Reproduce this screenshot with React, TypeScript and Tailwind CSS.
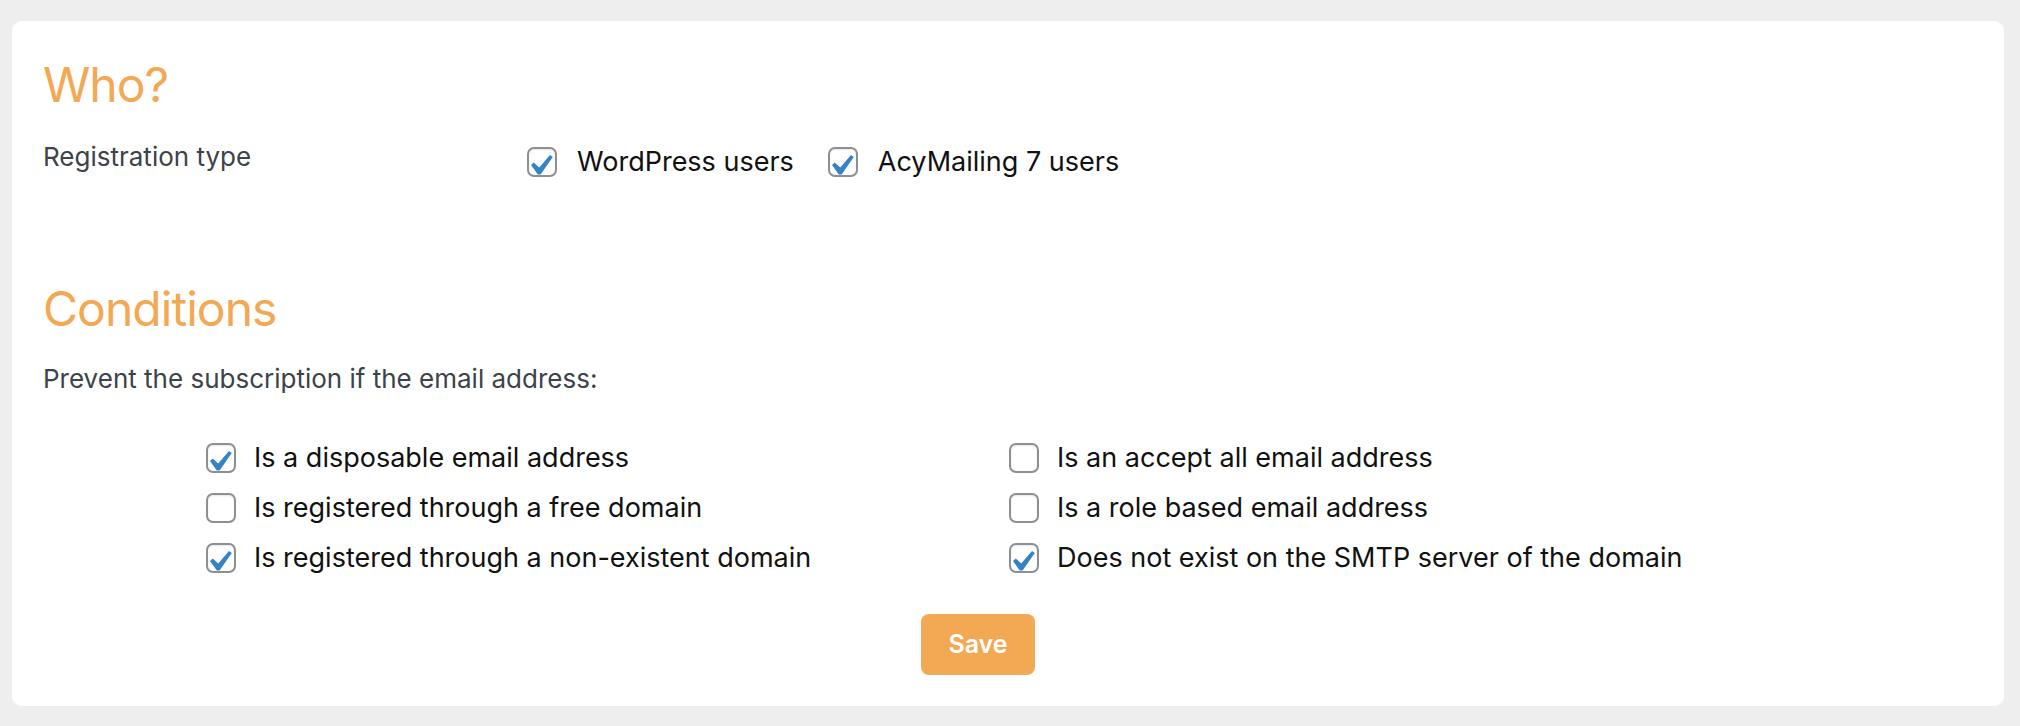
import React from 'react';

const font = { fontFamily: 'Inter, "Noto Sans", sans-serif' };

interface CheckProps {
  label: string;
  checked?: boolean;
  gap?: string;
}

const CheckMark: React.FC = () => (
  <svg
    viewBox="0 0 30 30"
    className="absolute -left-[2px] -top-[2px] h-[30px] w-[30px] overflow-visible"
  >
    <path
      d="M23 8l2.8 2-12.2 17.6h-2.8L4 18l2.8-2.6 5.4 5z"
      fill="#3582c4"
    />
  </svg>
);

const Check: React.FC<CheckProps> = ({ label, checked = false, gap = 'gap-[20px]' }) => (
  <label className={`flex h-[30px] items-center ${gap} cursor-pointer`}>
    <span className="relative h-[30px] w-[30px] shrink-0 rounded-[7px] border-2 border-[#8c8f94] bg-white shadow-[inset_0_1px_2px_rgba(0,0,0,0.1)]">
      {checked && <CheckMark />}
    </span>
    <span className="text-[27px] leading-[30px] text-[#111111] whitespace-nowrap">{label}</span>
  </label>
);

const conditions = [
  { label: 'Is a disposable email address', checked: true },
  { label: 'Is an accept all email address', checked: false },
  { label: 'Is registered through a free domain', checked: false },
  { label: 'Is a role based email address', checked: false },
  { label: 'Is registered through a non-existent domain', checked: true },
  { label: 'Does not exist on the SMTP server of the domain', checked: true },
];

export default function App() {
  return (
    <div className="min-h-[726px] bg-[#eeeeee] pl-[12px] pr-[16px] pt-[21px] pb-[20px]" style={font}>
      <div className="rounded-[10px] bg-white pl-[31px] pt-[35px] pb-[31px]">
        <h2 className="text-[48px] leading-[58px] font-normal tracking-[-0.02em] text-[#f3a853]">Who?</h2>

        <div className="mt-[28px] flex items-start">
          <div className="w-[484px] shrink-0 text-[26px] leading-[30px] text-[#3c434a]">Registration type</div>
          <div className="mt-[5px] flex items-center gap-[34px]">
            <Check label="WordPress users" checked />
            <Check label="AcyMailing 7 users" checked />
          </div>
        </div>

        <h2 className="mt-[103px] text-[48px] leading-[58px] font-normal tracking-[-0.02em] text-[#f3a853]">Conditions</h2>

        <p className="mt-[26px] text-[26px] leading-[30px] text-[#3c434a]">Prevent the subscription if the email address:</p>

        <div className="ml-[163px] mt-[49px] grid grid-cols-[803px_1fr] gap-y-[20px]">
          {conditions.map((c) => (
            <Check key={c.label} label={c.label} checked={c.checked} gap="gap-[18px]" />
          ))}
        </div>

        <button className="ml-[878px] mt-[41px] flex h-[61px] w-[114px] items-center justify-center rounded-[8px] bg-[#f3a853] text-[25px] font-semibold text-white">
          Save
        </button>
      </div>
    </div>
  );
}
